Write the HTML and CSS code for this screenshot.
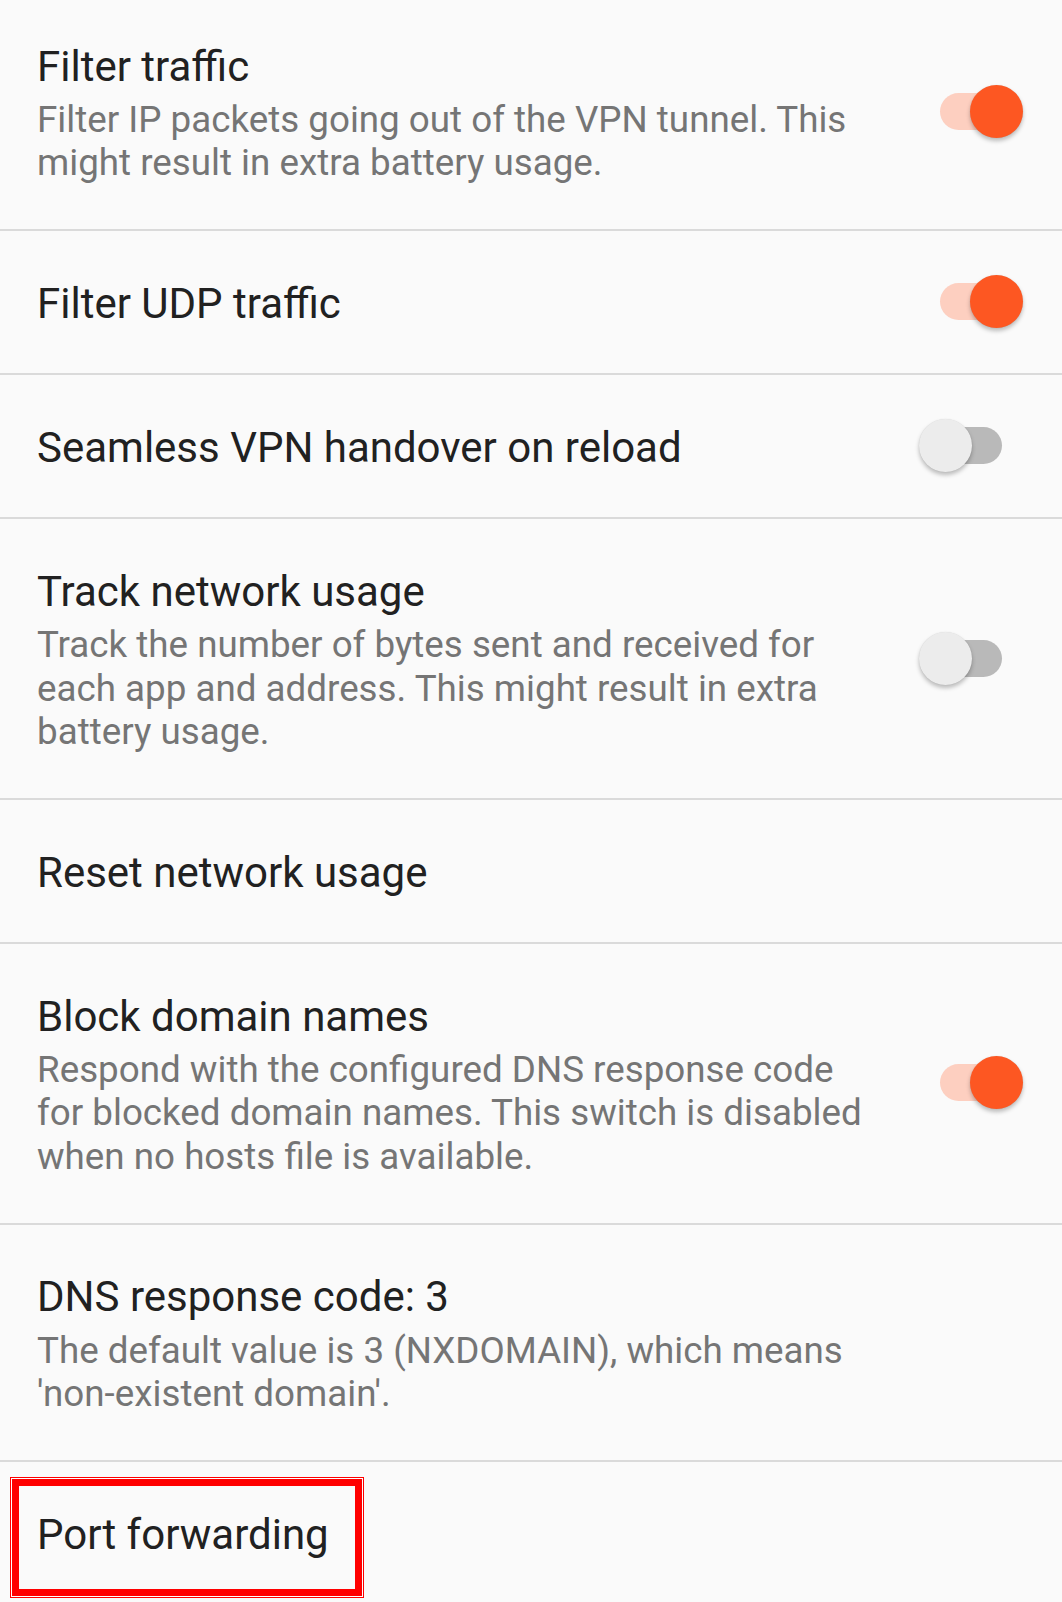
FILE: index.html
```html
<!DOCTYPE html>
<html lang="en">
<head>
<meta charset="utf-8">
<title>Settings</title>
<link rel="stylesheet" href="styles.css">
</head>
<body>
<div class="list">
  <div class="row">
    <div class="text">
      <div class="title">Filter traffic</div>
      <div class="summary">Filter IP packets going out of the VPN tunnel. This<br>might result in extra battery usage.</div>
    </div>
    <div class="switch on"><span class="track"></span><span class="thumb"></span></div>
  </div>
  <div class="row">
    <div class="text">
      <div class="title">Filter UDP traffic</div>
    </div>
    <div class="switch on"><span class="track"></span><span class="thumb"></span></div>
  </div>
  <div class="row">
    <div class="text">
      <div class="title">Seamless VPN handover on reload</div>
    </div>
    <div class="switch"><span class="track"></span><span class="thumb"></span></div>
  </div>
  <div class="row">
    <div class="text">
      <div class="title">Track network usage</div>
      <div class="summary">Track the number of bytes sent and received for<br>each app and address. This might result in extra<br>battery usage.</div>
    </div>
    <div class="switch"><span class="track"></span><span class="thumb"></span></div>
  </div>
  <div class="row">
    <div class="text">
      <div class="title">Reset network usage</div>
    </div>
  </div>
  <div class="row">
    <div class="text">
      <div class="title">Block domain names</div>
      <div class="summary">Respond with the configured DNS response code<br>for blocked domain names. This switch is disabled<br>when no hosts file is available.</div>
    </div>
    <div class="switch on"><span class="track"></span><span class="thumb"></span></div>
  </div>
  <div class="row">
    <div class="text">
      <div class="title">DNS response code: 3</div>
      <div class="summary">The default value is 3 (NXDOMAIN), which means<br>'non-existent domain'.</div>
    </div>
  </div>
  <div class="row last">
    <div class="text">
      <div class="title">Port forwarding</div>
    </div>
    <div class="highlight"></div>
  </div>
</div>
</body>
</html>
```

FILE: styles.css
```css
html, body {
  margin: 0;
  padding: 0;
  background: #fafafa;
}

body {
  width: 1062px;
  height: 1602px;
  overflow: hidden;
  font-family: Roboto, "Noto Sans", sans-serif;
}

.list {
  margin-top: -6px;
}

.row {
  position: relative;
  display: flex;
  align-items: center;
  padding: 47.5px 39px 44.5px 37px;
  border-bottom: 2px solid #dadada;
}

.row.last {
  border-bottom: none;
}

.text {
  flex: 1;
  min-width: 0;
}

.title {
  font-size: 42px;
  line-height: 50px;
  color: #212121;
  white-space: nowrap;
}

.summary {
  margin-top: 6.5px;
  font-size: 36.75px;
  line-height: 43.4px;
  color: #757575;
  white-space: nowrap;
}

.switch {
  position: relative;
  flex: none;
  width: 104px;
  height: 53px;
  margin-top: -4px;
}

.track {
  position: absolute;
  left: 21px;
  top: 8px;
  width: 62px;
  height: 37px;
  border-radius: 19px;
  background: #b9b9b9;
}

.thumb {
  position: absolute;
  left: 0;
  top: 0;
  width: 53px;
  height: 53px;
  border-radius: 50%;
  background: #ececec;
  box-shadow: 0 3px 4px rgba(0, 0, 0, 0.25), 0 0 1px rgba(0, 0, 0, 0.12);
}

.switch.on .track {
  background: #fdcfc0;
}

.switch.on .thumb {
  left: 51px;
  background: #fd5722;
}

.highlight {
  position: absolute;
  left: 12.3px;
  top: 17.3px;
  width: 336px;
  height: 102.7px;
  border: 7px solid #ff0000;
  box-shadow: 0 0 0 1px #ffffff, 0 0 0 2px #ff0000;
  pointer-events: none;
}
```
